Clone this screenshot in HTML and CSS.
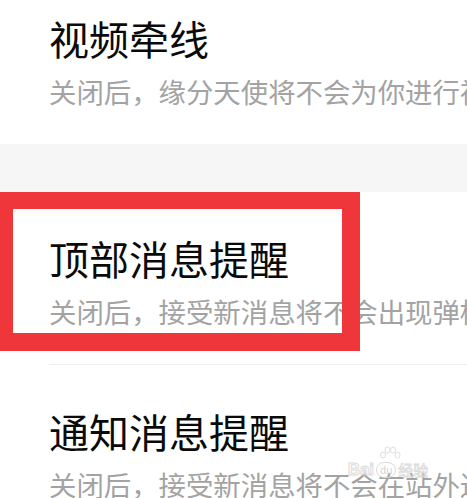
FILE: index.html
```html
<!DOCTYPE html>
<html lang="zh-CN">
<head>
  <meta charset="UTF-8">
  <title>消息设置</title>
  <link rel="stylesheet" href="styles.css">
</head>
<body>

  <div class="settings">
    <div class="item first">
      <div class="title">视频牵线</div>
      <div class="desc">关闭后，缘分天使将不会为你进行视频牵线</div>
    </div>

    <div class="band"></div>

    <div class="item lined">
      <div class="title">顶部消息提醒</div>
      <div class="desc">关闭后，接受新消息将不会出现弹框提醒</div>
    </div>

    <div class="item">
      <div class="title">通知消息提醒</div>
      <div class="desc">关闭后，接受新消息将不会在站外进行提醒</div>
    </div>

    <div class="highlight"></div>

    <div class="watermark">
      <svg class="paw" width="26" height="16" viewBox="0 0 26 16">
        <g fill="none" stroke="#dcdcdc" stroke-width="1">
          <ellipse cx="6" cy="9" rx="2.5" ry="3"/>
          <ellipse cx="10.5" cy="4" rx="2.5" ry="3"/>
          <ellipse cx="16" cy="4" rx="2.5" ry="3"/>
          <ellipse cx="20.5" cy="9" rx="2.5" ry="3"/>
        </g>
      </svg>
      <div class="mark-row">
        <span class="mark-bai">Bai</span>
        <span class="mark-du">du</span>
        <span class="mark-jy">经验</span>
      </div>
    </div>
  </div>

</body>
</html>
```

FILE: styles.css
```css
body {
  margin: 0;
  padding: 0;
  background-color: #fff;
  font-family: "Noto Sans CJK SC", "Noto Sans", sans-serif;
  overflow: hidden;
}

.settings {
  position: relative;
  width: 467px;
  height: 498px;
  overflow: hidden;
}

.item {
  padding: 42px 0 35px 49px;
  white-space: nowrap;
  overflow: hidden;
}

.item.first {
  padding-top: 14px;
}

.item.lined {
  padding-left: 0;
  margin-left: 49px;
  border-bottom: 1px solid #efefef;
}

.title {
  font-size: 40px;
  line-height: 48px;
  color: #0a0a0a;
}

.desc {
  margin-top: 11px;
  font-size: 27.4px;
  line-height: 36px;
  color: #a3a3a3;
}

.band {
  height: 48px;
  background-color: #f6f6f6;
}

.highlight {
  position: absolute;
  left: 0;
  top: 192px;
  width: 329px;
  height: 124px;
  border-style: solid;
  border-color: #ee363b;
  border-width: 17px 18px 18px 13px;
}

.watermark {
  position: absolute;
  left: 340px;
  top: 446px;
  width: 96px;
  display: flex;
  flex-direction: column;
  align-items: center;
  opacity: 0.9;
}

.paw {
  margin-left: 4px;
}

.mark-row {
  display: flex;
  align-items: center;
  gap: 2px;
  margin-top: -3px;
  color: #e0e0e0;
  font-family: "Liberation Sans", sans-serif;
}

.mark-bai {
  font-size: 17px;
  font-weight: bold;
  color: transparent;
  -webkit-text-stroke: 1px #d8d8d8;
}

.mark-du {
  display: inline-block;
  font-size: 11px;
  line-height: 14px;
  padding: 0 3px;
  border: 1px solid #d8d8d8;
  border-radius: 8px;
  color: #d0d0d0;
}

.mark-jy {
  font-family: "Noto Sans CJK SC", sans-serif;
  font-size: 15px;
  color: transparent;
  -webkit-text-stroke: 0.8px #d8d8d8;
}
```
